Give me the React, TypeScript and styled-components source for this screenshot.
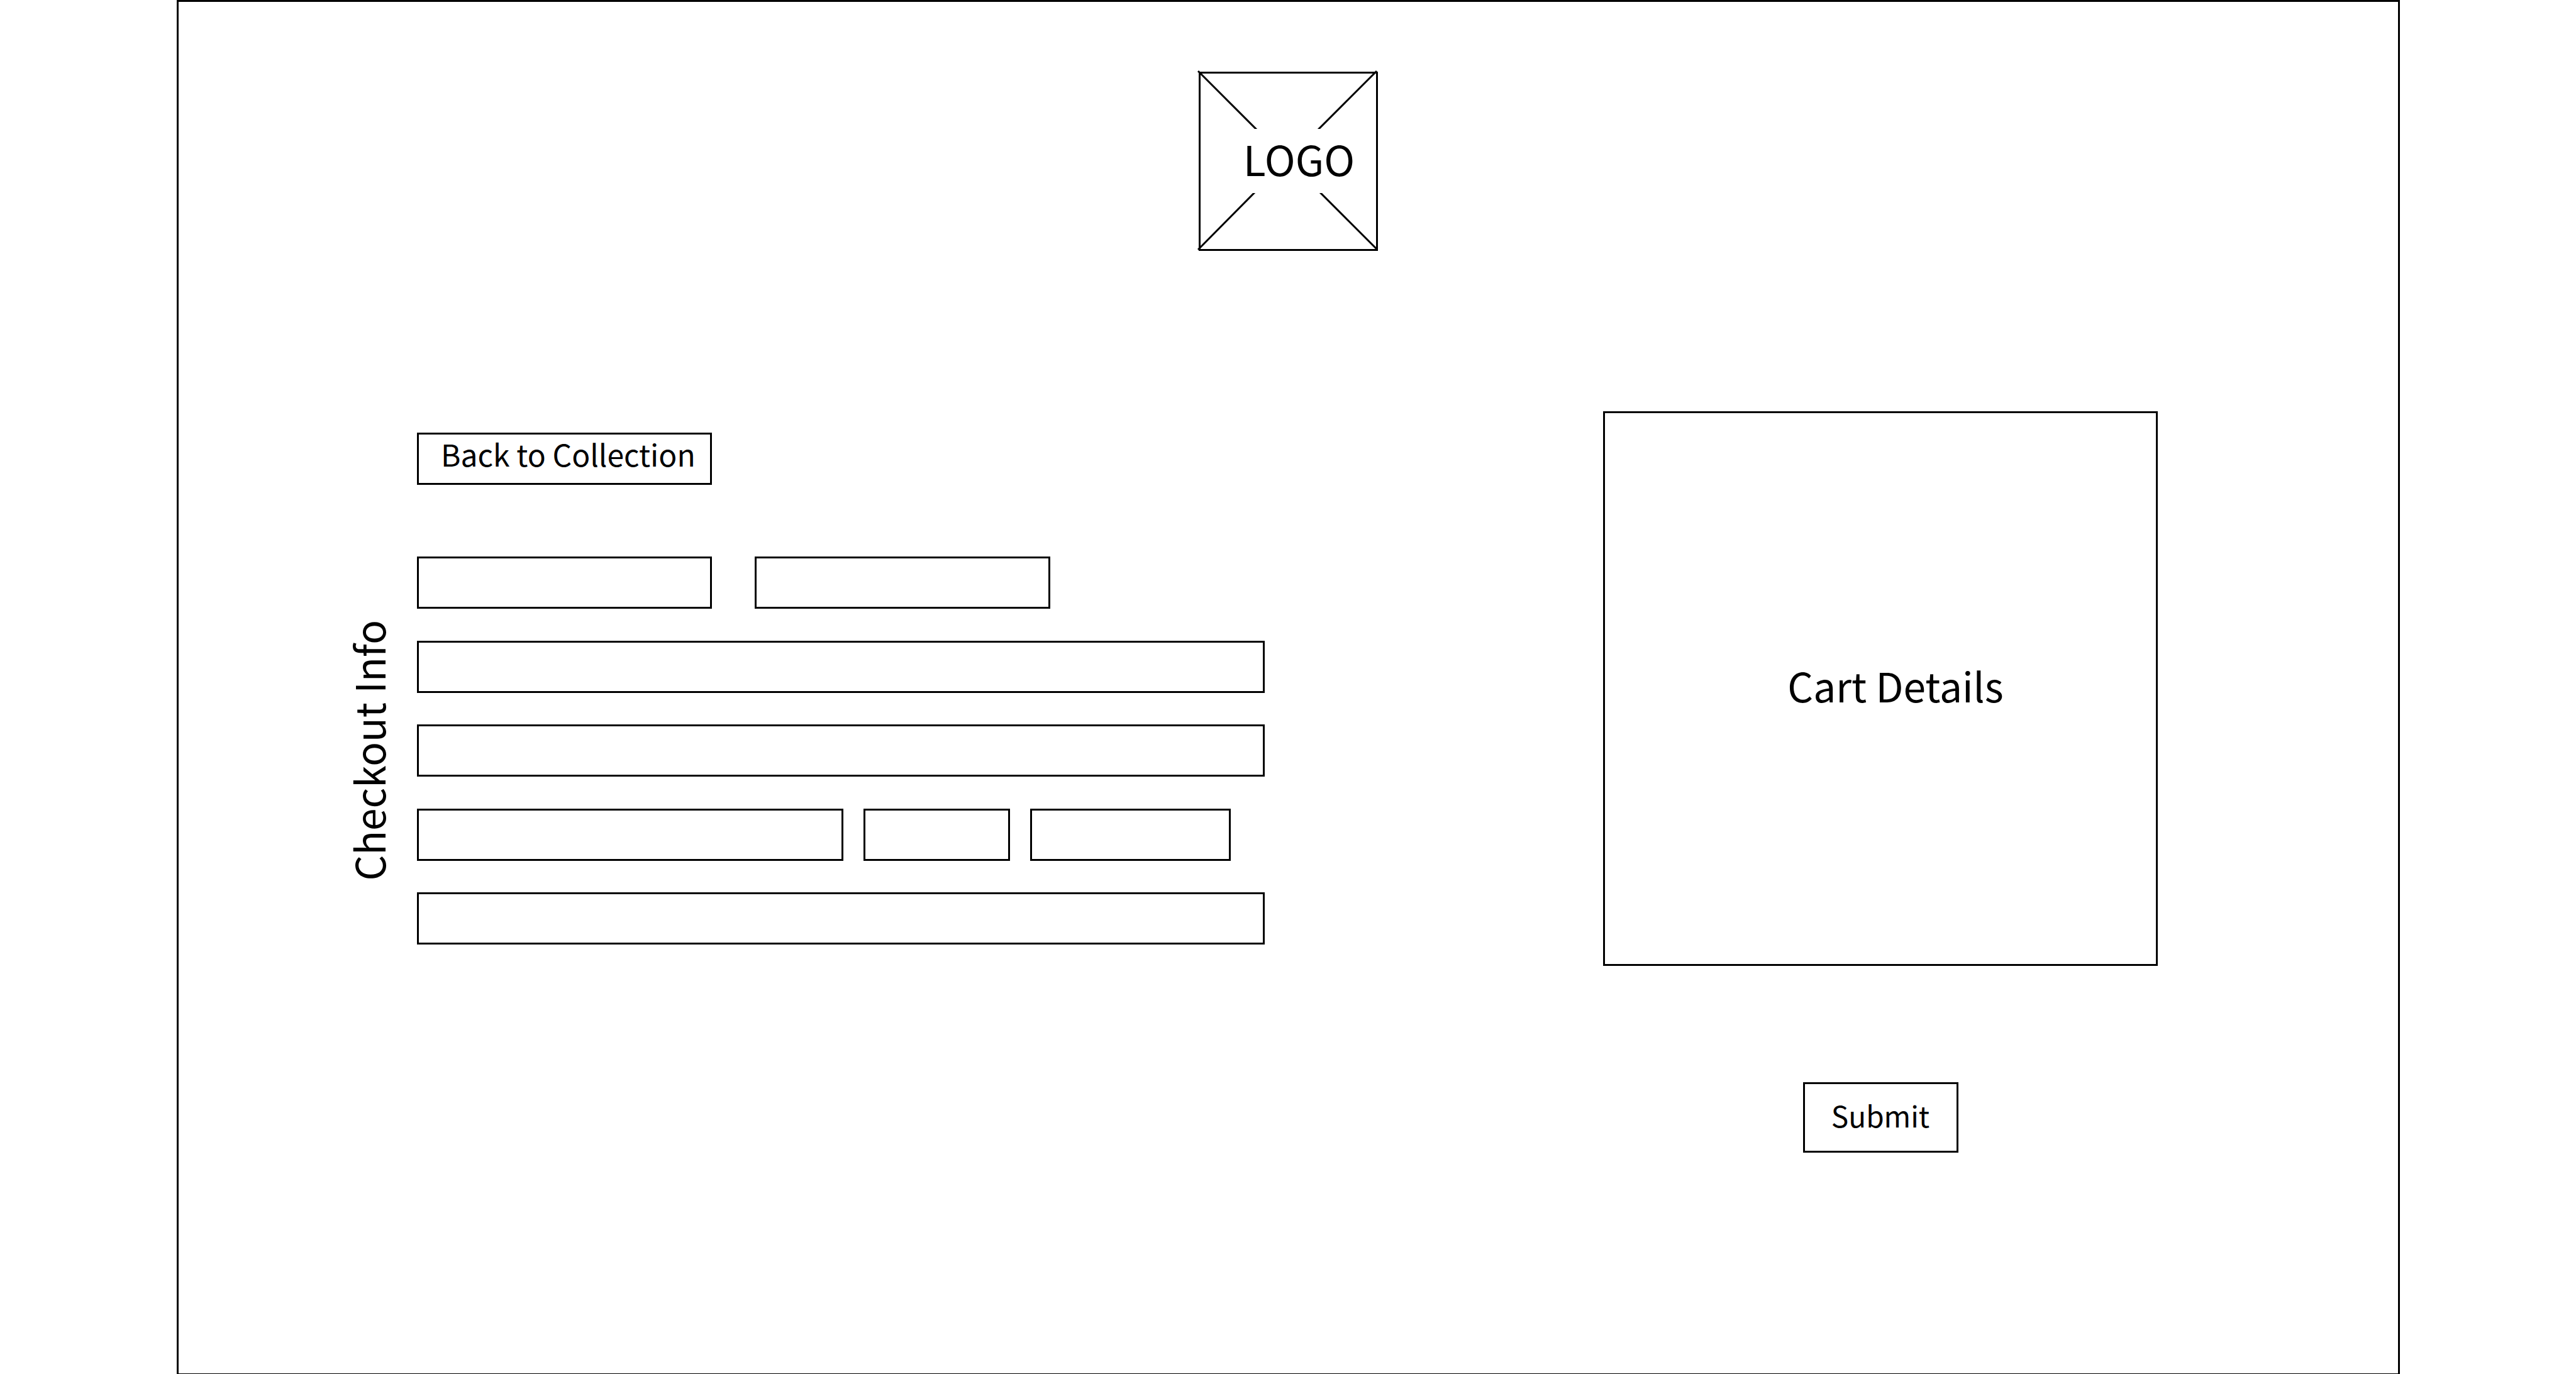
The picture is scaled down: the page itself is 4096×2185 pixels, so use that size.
import React from "react";
import styled, { createGlobalStyle, css } from "styled-components";

const GlobalStyle = createGlobalStyle`
  *, *::before, *::after { box-sizing: border-box; }
  body {
    margin: 0;
    background: #fff;
    color: #000;
    font-family: "Noto Sans CJK SC", "Noto Sans", sans-serif;
  }
`;

const outline = css`
  border: 3px solid #000;
  border-radius: 0;
  background: #fff;
  color: #000;
`;

const Page = styled.div`
  padding: 0 280px 0 281px;
`;

const Frame = styled.div`
  min-height: 100vh;
  border: 3px solid #000;
  border-bottom-width: 1px;
`;

const Header = styled.header`
  display: flex;
  justify-content: center;
  padding-top: 111px;
`;

const Logo = styled.div`
  ${outline}
  position: relative;
  display: flex;
  align-items: center;
  justify-content: center;
  width: 285px;
  height: 285px;
  padding: 0 0 12px 34px;
  font-size: 66px;
  line-height: 80px;
`;

const LogoCross = styled.svg`
  position: absolute;
  inset: -3px;
  width: 285px;
  height: 285px;
  overflow: visible;
`;

const Main = styled.main`
  display: flex;
  justify-content: space-between;
  align-items: flex-start;
  padding: 255px 382px 0 261px;
`;

const Checkout = styled.section`
  display: grid;
  grid-template-columns: 80px minmax(0, 1fr);
  column-gap: 38px;
  row-gap: 114px;
  flex: 0 1 1466px;
  padding-top: 34px;
`;

const BackButton = styled.button`
  ${outline}
  grid-column: 2;
  justify-self: start;
  width: 469px;
  height: 83px;
  padding: 0 0 17px 35px;
  font-family: inherit;
  font-size: 48px;
  line-height: 60px;
  text-align: left;
  white-space: nowrap;
`;

const SideTitle = styled.h2`
  margin: 0;
  place-self: center;
  writing-mode: vertical-rl;
  transform: rotate(180deg);
  font-size: 64px;
  font-weight: 400;
  line-height: 80px;
  white-space: nowrap;
`;

const Form = styled.form`
  display: flex;
  flex-direction: column;
  justify-content: space-between;
  min-height: 617px;
`;

const Row = styled.div<{ $gap?: number }>`
  display: flex;
  gap: ${({ $gap = 0 }) => $gap}px;
`;

const Field = styled.input<{ $width?: number }>`
  ${outline}
  flex: ${({ $width }) => ($width ? `0 1 ${$width}px` : "1 1 auto")};
  min-width: 0;
  height: 83px;
  padding: 0 24px;
  font-family: inherit;
  font-size: 48px;
`;

const Summary = styled.aside`
  display: flex;
  flex-direction: column;
  align-items: center;
  gap: 185px;
  flex: 0 1 882px;
`;

const Cart = styled.section`
  ${outline}
  display: flex;
  align-items: center;
  justify-content: center;
  width: 100%;
  aspect-ratio: 1;
  padding: 0 0 12px 48px;
`;

const CartTitle = styled.h2`
  margin: 0;
  font-size: 64px;
  font-weight: 400;
  line-height: 80px;
`;

const SubmitButton = styled.button`
  ${outline}
  width: 247px;
  height: 112px;
  padding: 0 0 8px;
  font-family: inherit;
  font-size: 46px;
  line-height: 60px;
`;

export default function App() {
  return (
    <>
      <GlobalStyle />
      <Page>
        <Frame>
          <Header>
            <Logo>
              <LogoCross viewBox="0 0 285 285" aria-hidden="true">
                <clipPath id="logo-gap">
                  <rect x="-4" y="-4" width="293" height="95" />
                  <rect x="-4" y="193" width="293" height="96" />
                </clipPath>
                <g clipPath="url(#logo-gap)" stroke="#000" strokeWidth="3">
                  <path d="M-1 -1L94 94" />
                  <path d="M283 -1L188 94" />
                  <path d="M-1 283L92 189" />
                  <path d="M284 283L190 189" />
                </g>
              </LogoCross>
              LOGO
            </Logo>
          </Header>
          <Main>
            <Checkout aria-labelledby="checkout-title">
              <BackButton type="button">Back to Collection</BackButton>
              <SideTitle id="checkout-title">Checkout Info</SideTitle>
              <Form id="checkout-form" onSubmit={(e) => e.preventDefault()}>
                <Row $gap={68}>
                  <Field $width={469} aria-label="First name" />
                  <Field $width={470} aria-label="Last name" />
                </Row>
                <Row>
                  <Field aria-label="Address" />
                </Row>
                <Row>
                  <Field aria-label="Address line 2" />
                </Row>
                <Row $gap={32}>
                  <Field $width={678} aria-label="City" />
                  <Field $width={233} aria-label="State" />
                  <Field $width={319} aria-label="Zip code" />
                </Row>
                <Row>
                  <Field aria-label="Email" />
                </Row>
              </Form>
            </Checkout>
            <Summary>
              <Cart>
                <CartTitle>Cart Details</CartTitle>
              </Cart>
              <SubmitButton type="submit" form="checkout-form">
                Submit
              </SubmitButton>
            </Summary>
          </Main>
        </Frame>
      </Page>
    </>
  );
}
